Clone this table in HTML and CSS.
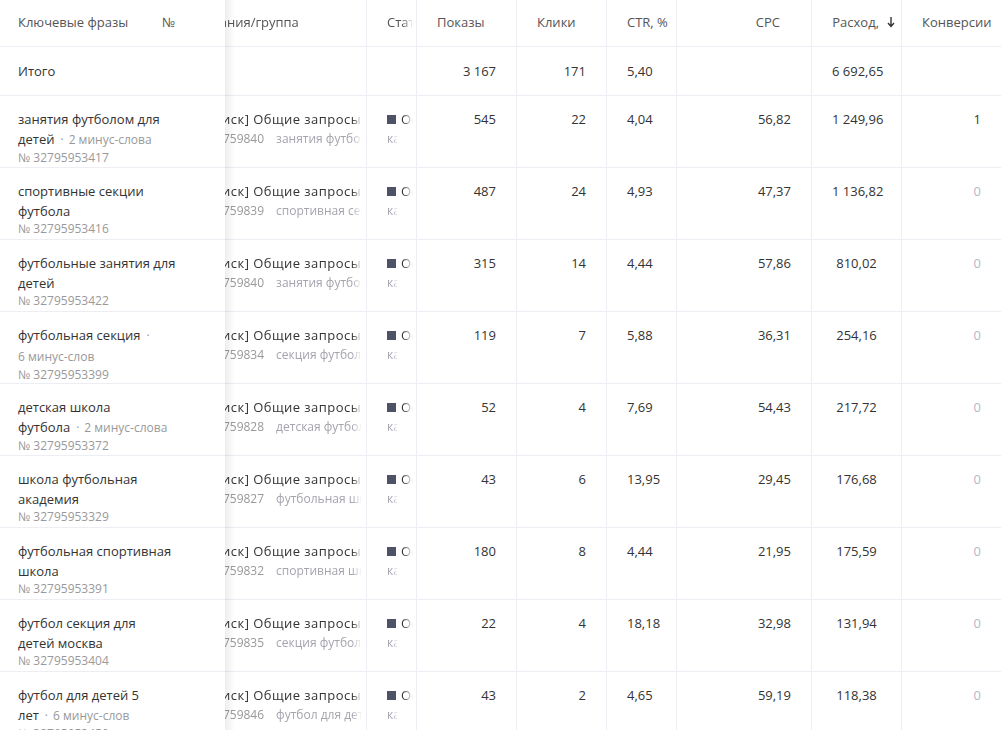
FILE: index.html
```html
<!DOCTYPE html>
<html lang="ru">
<head>
<meta charset="utf-8">
<title>Ключевые фразы</title>
<link rel="stylesheet" href="styles.css">
</head>
<body>
<div class="table">
  <div class="frozen">
    <div class="fcell head"><span class="h-kw">Ключевые фразы</span><span class="h-num">№</span></div>
    <div class="fcell total">Итого</div>
    <div class="fcell row"><div class="kw">занятия футболом для<br>детей<span class="dot">·</span><span class="minus">2 минус-слова</span></div><div class="id">№ 32795953417</div></div>
    <div class="fcell row"><div class="kw">спортивные секции футбола</div><div class="id">№ 32795953416</div></div>
    <div class="fcell row"><div class="kw">футбольные занятия для детей</div><div class="id">№ 32795953422</div></div>
    <div class="fcell row"><div class="kw">футбольная секция<span class="dot">·</span><br><span class="minus">6 минус-слов</span></div><div class="id">№ 32795953399</div></div>
    <div class="fcell row"><div class="kw">детская школа<br>футбола<span class="dot">·</span><span class="minus">2 минус-слова</span></div><div class="id">№ 32795953372</div></div>
    <div class="fcell row"><div class="kw">школа футбольная академия</div><div class="id">№ 32795953329</div></div>
    <div class="fcell row"><div class="kw">футбольная спортивная школа</div><div class="id">№ 32795953391</div></div>
    <div class="fcell row"><div class="kw">футбол секция для<br>детей москва</div><div class="id">№ 32795953404</div></div>
    <div class="fcell row"><div class="kw">футбол для детей 5<br>лет<span class="dot">·</span><span class="minus">6 минус-слов</span></div><div class="id">№ 32795953450</div></div>
  </div>
  <div class="viewport">
    <div class="grid">
      <!-- header -->
      <div class="cell head camp"><div class="clip">Кампания/группа</div></div>
      <div class="cell head status"><div class="clip">Статус</div></div>
      <div class="cell head">Показы</div>
      <div class="cell head">Клики</div>
      <div class="cell head">CTR, %</div>
      <div class="cell head right cpc-h">CPC</div>
      <div class="cell head right cost-h">Расход,<svg class="arrow" width="8" height="12" viewBox="0 0 8 12"><path d="M4 1v9M1 7l3 3.5L7 7" fill="none" stroke="#333" stroke-width="1.4"/></svg></div>
      <div class="cell head last">Конверсии</div>

      <!-- total -->
      <div class="cell total"></div>
      <div class="cell total"></div>
      <div class="cell total right">3&nbsp;167</div>
      <div class="cell total right">171</div>
      <div class="cell total">5,40</div>
      <div class="cell total right"></div>
      <div class="cell total center">6&nbsp;692,65</div>
      <div class="cell total right last"></div>

      <!-- 1 -->
      <div class="cell row camp"><div class="clip"><div class="c-name">Б [Поиск] Общие запросы</div><div class="c-sub"><span class="gid">№ 154759840</span><span class="gname">занятия футболом для детей</span></div></div></div>
      <div class="cell row status"><div class="st"><i class="sq"></i><span class="clip">Остановлена</span></div><div class="st-sub">кампания остановлена</div></div>
      <div class="cell row right">545</div>
      <div class="cell row right">22</div>
      <div class="cell row">4,04</div>
      <div class="cell row right">56,82</div>
      <div class="cell row center">1&nbsp;249,96</div>
      <div class="cell row right last">1</div>

      <!-- 2 -->
      <div class="cell row camp"><div class="clip"><div class="c-name">Б [Поиск] Общие запросы</div><div class="c-sub"><span class="gid">№ 154759839</span><span class="gname">спортивная секция футбола</span></div></div></div>
      <div class="cell row status"><div class="st"><i class="sq"></i><span class="clip">Остановлена</span></div><div class="st-sub">кампания остановлена</div></div>
      <div class="cell row right">487</div>
      <div class="cell row right">24</div>
      <div class="cell row">4,93</div>
      <div class="cell row right">47,37</div>
      <div class="cell row center">1&nbsp;136,82</div>
      <div class="cell row right zero last">0</div>

      <!-- 3 -->
      <div class="cell row camp"><div class="clip"><div class="c-name">Б [Поиск] Общие запросы</div><div class="c-sub"><span class="gid">№ 154759840</span><span class="gname">занятия футболом для детей</span></div></div></div>
      <div class="cell row status"><div class="st"><i class="sq"></i><span class="clip">Остановлена</span></div><div class="st-sub">кампания остановлена</div></div>
      <div class="cell row right">315</div>
      <div class="cell row right">14</div>
      <div class="cell row">4,44</div>
      <div class="cell row right">57,86</div>
      <div class="cell row center">810,02</div>
      <div class="cell row right zero last">0</div>

      <!-- 4 -->
      <div class="cell row camp"><div class="clip"><div class="c-name">Б [Поиск] Общие запросы</div><div class="c-sub"><span class="gid">№ 154759834</span><span class="gname">секция футбола</span></div></div></div>
      <div class="cell row status"><div class="st"><i class="sq"></i><span class="clip">Остановлена</span></div><div class="st-sub">кампания остановлена</div></div>
      <div class="cell row right">119</div>
      <div class="cell row right">7</div>
      <div class="cell row">5,88</div>
      <div class="cell row right">36,31</div>
      <div class="cell row center">254,16</div>
      <div class="cell row right zero last">0</div>

      <!-- 5 -->
      <div class="cell row camp"><div class="clip"><div class="c-name">Б [Поиск] Общие запросы</div><div class="c-sub"><span class="gid">№ 154759828</span><span class="gname">детская футбольная школа</span></div></div></div>
      <div class="cell row status"><div class="st"><i class="sq"></i><span class="clip">Остановлена</span></div><div class="st-sub">кампания остановлена</div></div>
      <div class="cell row right">52</div>
      <div class="cell row right">4</div>
      <div class="cell row">7,69</div>
      <div class="cell row right">54,43</div>
      <div class="cell row center">217,72</div>
      <div class="cell row right zero last">0</div>

      <!-- 6 -->
      <div class="cell row camp"><div class="clip"><div class="c-name">Б [Поиск] Общие запросы</div><div class="c-sub"><span class="gid">№ 154759827</span><span class="gname">футбольная школа</span></div></div></div>
      <div class="cell row status"><div class="st"><i class="sq"></i><span class="clip">Остановлена</span></div><div class="st-sub">кампания остановлена</div></div>
      <div class="cell row right">43</div>
      <div class="cell row right">6</div>
      <div class="cell row">13,95</div>
      <div class="cell row right">29,45</div>
      <div class="cell row center">176,68</div>
      <div class="cell row right zero last">0</div>

      <!-- 7 -->
      <div class="cell row camp"><div class="clip"><div class="c-name">Б [Поиск] Общие запросы</div><div class="c-sub"><span class="gid">№ 154759832</span><span class="gname">спортивная школа футбола</span></div></div></div>
      <div class="cell row status"><div class="st"><i class="sq"></i><span class="clip">Остановлена</span></div><div class="st-sub">кампания остановлена</div></div>
      <div class="cell row right">180</div>
      <div class="cell row right">8</div>
      <div class="cell row">4,44</div>
      <div class="cell row right">21,95</div>
      <div class="cell row center">175,59</div>
      <div class="cell row right zero last">0</div>

      <!-- 8 -->
      <div class="cell row camp"><div class="clip"><div class="c-name">Б [Поиск] Общие запросы</div><div class="c-sub"><span class="gid">№ 154759835</span><span class="gname">секция футбола для детей</span></div></div></div>
      <div class="cell row status"><div class="st"><i class="sq"></i><span class="clip">Остановлена</span></div><div class="st-sub">кампания остановлена</div></div>
      <div class="cell row right">22</div>
      <div class="cell row right">4</div>
      <div class="cell row">18,18</div>
      <div class="cell row right">32,98</div>
      <div class="cell row center">131,94</div>
      <div class="cell row right zero last">0</div>

      <!-- 9 -->
      <div class="cell row camp"><div class="clip"><div class="c-name">Б [Поиск] Общие запросы</div><div class="c-sub"><span class="gid">№ 154759846</span><span class="gname">футбол для детей</span></div></div></div>
      <div class="cell row status"><div class="st"><i class="sq"></i><span class="clip">Остановлена</span></div><div class="st-sub">кампания остановлена</div></div>
      <div class="cell row right">43</div>
      <div class="cell row right">2</div>
      <div class="cell row">4,65</div>
      <div class="cell row right">59,19</div>
      <div class="cell row center">118,38</div>
      <div class="cell row right zero last">0</div>
    </div>
  </div>
</div>
</body>
</html>
```

FILE: styles.css
```css
* { box-sizing: border-box; }
html, body { margin: 0; padding: 0; background: #fff; }
body {
  font-family: "Open Sans", "Noto Sans", sans-serif;
  font-size: 13px;
  line-height: 20px;
  color: #333;
}
.table {
  display: flex;
  height: 730px;
  overflow: hidden;
}

/* frozen keyword column */
.frozen {
  flex: none;
  width: 225px;
  position: relative;
  z-index: 2;
  background: #fff;
  display: grid;
  grid-template-rows: 47px 49px repeat(9, 72px);
}
.frozen::after {
  content: "";
  position: absolute;
  top: 0;
  bottom: 0;
  left: 100%;
  width: 10px;
  background: linear-gradient(to right, rgba(0, 0, 0, 0.07), rgba(0, 0, 0, 0));
}
.fcell {
  border-bottom: 1px solid #eceef4;
  padding: 13px 18px 0;
}
.fcell.head {
  display: grid;
  grid-template-columns: 144px 1fr;
  padding: 12px 0 0 18px;
  color: #555;
}
.fcell.total { padding-top: 14px; }
.kw { width: 175px; }
.dot { color: #999; font-size: 12px; margin: 0 5px 0 6px; }
.minus { color: #999; font-size: 12px; white-space: nowrap; }
.id { color: #999; font-size: 12px; line-height: 16px; }

/* scrolled part */
.viewport {
  flex: 1;
  min-width: 0;
  overflow: hidden;
}
.grid {
  display: grid;
  grid-template-columns: 200px 50px 100px 90px 70px 135px 90px 99px;
  grid-template-rows: 47px 49px repeat(9, 72px);
  margin-left: -58px;
  width: max-content;
}
.cell {
  border-right: 1px solid #eceef4;
  border-bottom: 1px solid #eceef4;
  padding: 13px 20px 0;
  white-space: nowrap;
}
.cell.last { border-right: 0; }
.cell.head { padding-top: 12px; color: #555; }
.cell.total { padding-top: 14px; }
.right { text-align: right; }
.center { text-align: center; }
.cpc-h { padding-right: 31px; }
.cost-h { padding-right: 6px; }
.arrow { margin-left: 8px; vertical-align: -1px; }
.zero { color: #b4b8c4; }

.camp { padding-right: 4px; }
.status { padding-right: 3px; overflow: hidden; }
.clip {
  overflow: hidden;
  -webkit-mask-image: linear-gradient(to right, #000 calc(100% - 10px), transparent);
  mask-image: linear-gradient(to right, #000 calc(100% - 10px), transparent);
}
.c-name { letter-spacing: 0.45px; }
.c-sub { font-size: 12px; color: #999; }
.gid { margin-right: 12px; }
.gname { color: #a4a4ae; }
.st { display: flex; align-items: center; }
.st .clip { flex: 1; min-width: 0; }
.sq {
  width: 9px;
  height: 9px;
  background: #4e5265;
  margin-right: 5px;
  flex: none;
}
.st-sub {
  width: 11px;
  overflow: hidden;
  font-size: 12px;
  color: #a4a4ae;
  -webkit-mask-image: linear-gradient(to right, #000 6px, transparent);
  mask-image: linear-gradient(to right, #000 6px, transparent);
}
```
